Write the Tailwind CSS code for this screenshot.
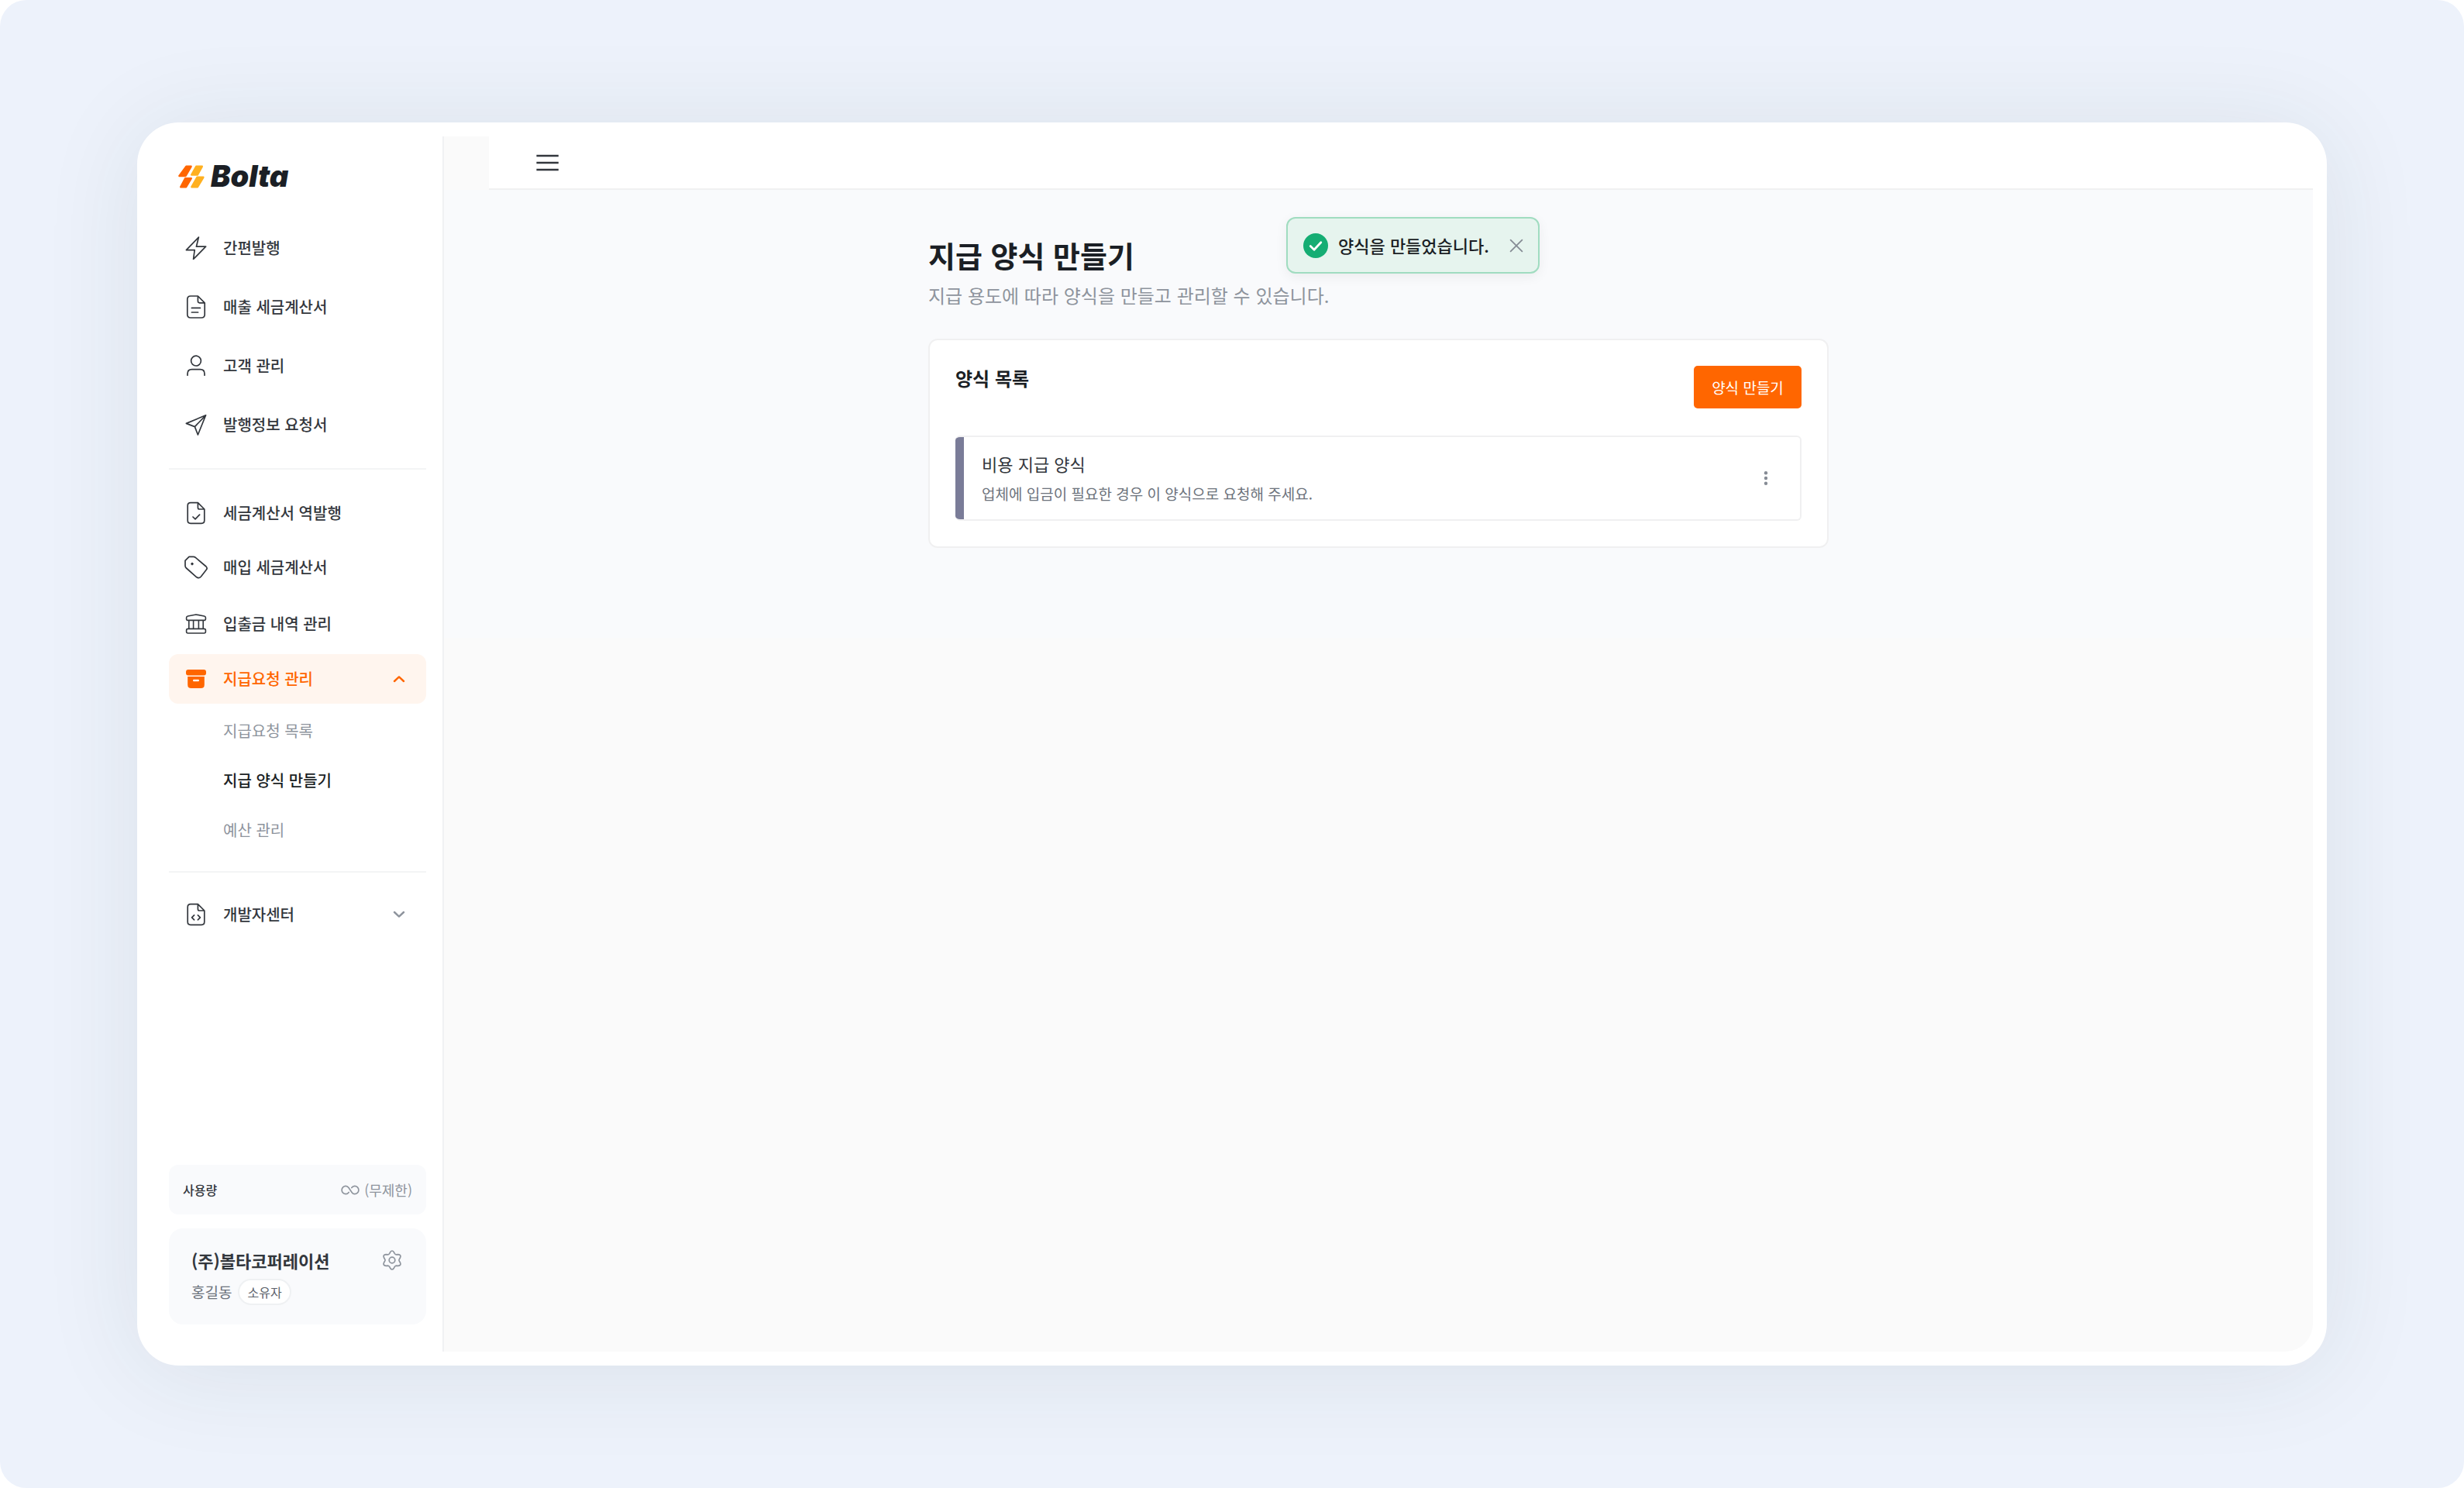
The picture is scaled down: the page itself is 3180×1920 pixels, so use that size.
<!DOCTYPE html>
<html lang="ko">
<head>
  <meta charset="UTF-8" />
  <meta name="viewport" content="width=device-width, initial-scale=1.0"/>
  <title>지급 양식 만들기 - Bolta</title>
  <script src="https://cdn.jsdelivr.net/npm/@tailwindcss/browser@4"></script>
</head>
<body class="bg-white font-['Noto_Sans_CJK_KR',sans-serif] text-[20px] leading-[30px] text-[#33373d]">

  <div class="flex min-h-screen rounded-[34px] bg-[#edf2fb] px-[177px] pt-[158px] pb-[158px]">
    <div class="flex flex-1 rounded-[54px] bg-white p-[18px] shadow-[0_8px_130px_rgba(30,55,60,0.09)]">

      <!-- Sidebar -->
      <aside class="flex w-[378px] shrink-0 flex-col border-r-2 border-[#f0f1f3] pt-[32px] pr-[21px] pb-[35px] pl-[23px]">
        <a href="#" class="flex items-center gap-[8px] pl-[12px]" aria-label="Bolta">
          <svg class="h-[30px] w-[34px]" viewBox="0 0 34 30">
            <g stroke-width="2.4" stroke-linejoin="round">
              <path fill="#ff6600" stroke="#ff6600" d="M10.4 1.8H16.6L9.6 14H1.4Z"/>
              <path fill="#ff6600" stroke="#ff6600" d="M9 17.2H16.8L10.2 28.2H3.2Z"/>
              <path fill="#ffb020" stroke="#ffb020" d="M23.2 1.8H30.8L24.8 12.6H17.2Z"/>
              <path fill="#ffb020" stroke="#ffb020" d="M24.4 15.8H32.4L25 28.2H17.4Z"/>
            </g>
          </svg>
          <span class="pb-[2px] font-['Inter',sans-serif] text-[38px] leading-[38px] font-black text-[#1b1f25] italic [font-feature-settings:'cv11']">Bolta</span>
        </a>

        <nav class="mt-[34px] flex flex-col font-medium">
          <a href="#" class="flex h-[76px] items-center gap-[20px] px-[20px]">
            <svg class="size-[30px]" viewBox="0 0 30 30" fill="none" stroke="currentColor" stroke-width="1.7" stroke-linejoin="round"><path d="M18.4 1 2.4 17.6H13.2L11.6 29.4 27.6 13.2H15.4Z"/></svg>
            간편발행
          </a>
          <a href="#" class="flex h-[76px] items-center gap-[20px] px-[20px]">
            <svg class="size-[30px]" viewBox="0 0 30 30" fill="none" stroke="currentColor" stroke-width="1.7" stroke-linecap="round" stroke-linejoin="round"><path d="M17.4 1H8Q3.8 1 3.8 5.2V24.8Q3.8 29 8 29H22Q26.2 29 26.2 24.8V9.8ZM17.4 1V7.6Q17.4 9.8 19.6 9.8H26.2M9.4 16.4H20.4M9.4 22H17.6"/></svg>
            매출 세금계산서
          </a>
          <a href="#" class="flex h-[76px] items-center gap-[20px] px-[20px]">
            <svg class="size-[30px]" viewBox="0 0 30 30" fill="none" stroke="currentColor" stroke-width="1.7" stroke-linecap="round"><circle cx="15" cy="8.6" r="6.4"/><path d="M4 27.2V25.2Q4 19.6 9.6 19.6H20.4Q26 19.6 26 25.2V27.2"/></svg>
            고객 관리
          </a>
          <a href="#" class="flex h-[76px] items-center gap-[20px] px-[20px]">
            <svg class="size-[30px]" viewBox="0 0 30 30" fill="none" stroke="currentColor" stroke-width="1.7" stroke-linejoin="round"><path d="M27.6 2.8 2.4 13.4 13.4 17.6 17.4 28ZM27.6 2.8 13.4 17.6"/></svg>
            발행정보 요청서
          </a>
        </nav>

        <hr class="mt-[18px] border-t-2 border-[#f3f4f5]" />

        <nav class="mt-[20px] flex flex-col font-medium">
          <a href="#" class="flex h-[72px] items-center gap-[20px] px-[20px]">
            <svg class="size-[30px]" viewBox="0 0 30 30" fill="none" stroke="currentColor" stroke-width="1.7" stroke-linecap="round" stroke-linejoin="round"><path d="M17.4 1.6H8Q4.2 1.6 4.2 5.4V24.6Q4.2 28.4 8 28.4H22Q25.8 28.4 25.8 24.6V10ZM17.4 1.6V8Q17.4 10 19.4 10H25.8M11 20 14 22.8 19.6 17.2"/></svg>
            세금계산서 역발행
          </a>
          <a href="#" class="flex h-[68px] items-center gap-[20px] px-[20px]">
            <svg class="size-[30px]" viewBox="0 0 30 30" fill="none" stroke="currentColor" stroke-width="1.7" stroke-linejoin="round"><path d="M6 1.4H11.4Q13.2 1.4 14.6 2.6L28 14Q30 16 28.4 18L21.4 27Q18.8 30 15.8 27.8L2.4 16Q1 14.8 1 13V6.4Z"/><circle cx="10" cy="10.6" r="1.3" fill="currentColor" stroke-width="1"/></svg>
            매입 세금계산서
          </a>
          <a href="#" class="flex h-[78px] items-center gap-[20px] px-[20px]">
            <svg class="size-[30px]" viewBox="0 0 30 30" fill="none" stroke="currentColor" stroke-width="1.6" stroke-linejoin="round"><path d="M15 3 25.6 5Q27.4 5.4 27.4 7V8.4Q27.4 10.4 25.4 10.4H4.6Q2.6 10.4 2.6 8.4V7Q2.6 5.4 4.4 5ZM5.8 10.4V21.4M11.6 10.4V21.4M18.4 10.4V21.4M24.2 10.4V21.4"/><rect x="2.6" y="21.4" width="24.8" height="5.6" rx="2"/></svg>
            입출금 내역 관리
          </a>
          <button type="button" class="flex h-[64px] items-center gap-[20px] rounded-[12px] bg-[#fff5ee] px-[20px] text-[#ff6600]">
            <svg class="size-[30px]" viewBox="0 0 30 30" fill="currentColor"><rect x="2" y="3" width="26" height="7.4" rx="3"/><path fill-rule="evenodd" d="M4.2 12H25.8V22.4Q25.8 27 21.2 27H8.800Q4.200 27 4.200 22.400ZM12 15.800Q11 15.800 11 17Q11 18.200 12 18.200H18Q19 18.200 19 17Q19 15.800 18 15.800Z"/></svg>
            <span class="flex-1 text-left">지급요청 관리</span>
            <svg class="size-[30px]" viewBox="0 0 30 30" fill="none" stroke="currentColor" stroke-width="2.4" stroke-linecap="round" stroke-linejoin="round"><path d="M9 18 15 12.400 21 18"/></svg>
          </button>
          <a href="#" class="mt-[3px] flex h-[64px] items-center pl-[70px] font-normal text-[#8e949d]">지급요청 목록</a>
          <a href="#" class="flex h-[64px] items-center pl-[70px] text-[#1b1f25]">지급 양식 만들기</a>
          <a href="#" class="flex h-[64px] items-center pl-[70px] font-normal text-[#8e949d]">예산 관리</a>
        </nav>

        <hr class="mt-[21px] border-t-2 border-[#f3f4f5]" />

        <nav class="mt-[22px] flex flex-col font-medium">
          <button type="button" class="flex h-[64px] items-center gap-[20px] px-[20px]">
            <svg class="size-[30px]" viewBox="0 0 30 30" fill="none" stroke="currentColor" stroke-width="1.7" stroke-linecap="round" stroke-linejoin="round"><path d="M17.4 1.6H8Q4.2 1.6 4.2 5.4V24.6Q4.2 28.4 8 28.4H22Q25.8 28.4 25.8 24.6V10ZM17.4 1.6V8Q17.4 10 19.4 10H25.8M12.6 15.8 9.6 18.8 12.6 21.8M17.4 15.8 20.4 18.8 17.4 21.8"/></svg>
            <span class="flex-1 text-left">개발자센터</span>
            <svg class="size-[30px] text-[#8e949d]" viewBox="0 0 30 30" fill="none" stroke="currentColor" stroke-width="2.4" stroke-linecap="round" stroke-linejoin="round"><path d="M9 12 15 17.6 21 12"/></svg>
          </button>
        </nav>

        <div class="mt-auto flex h-[64px] items-center justify-between rounded-[12px] bg-[#f9fafc] px-[18px]">
          <span class="text-[16px] font-medium">사용량</span>
          <span class="flex items-center gap-[6px] text-[18px] text-[#8e949d]">
            <svg class="h-[13px] w-[24px]" viewBox="0 0 26 14" fill="none" stroke="currentColor" stroke-width="1.8" stroke-linecap="round"><path d="M11 10.2Q9.4 12.6 6.800 12.600A5.600 5.600 0 0 1 6.800 1.400Q9.200 1.400 10.800 3.800L15.200 10.200Q16.800 12.600 19.200 12.600A5.600 5.600 0 0 0 19.200 1.400Q16.600 1.400 15 3.800"/></svg>
            (무제한)
          </span>
        </div>

        <div class="mt-[18px] flex h-[124px] flex-col justify-center gap-[9px] rounded-[18px] bg-[#f9fafc] pr-[31px] pl-[29px]">
          <div class="flex items-center justify-between">
            <strong class="text-[22px] font-bold">(주)볼타코퍼레이션</strong>
            <button type="button" aria-label="설정" class="text-[#8e949d]">
              <svg class="size-[26px]" viewBox="0 0 26 26" fill="none" stroke="currentColor" stroke-width="1.7" stroke-linejoin="round"><path d="M10.6 2.8Q13 -.8 15.4 2.8L16.4 4.6Q17.2 5.8 18.6 5.8L20.8 5.7Q25.2 6.2 23.4 10L22.3 11.9Q21.7 13 22.3 14.1L23.4 16Q25.2 19.8 20.8 20.3L18.6 20.2Q17.2 20.2 16.4 21.4L15.4 23.2Q13 26.8 10.6 23.2L9.6 21.4Q8.8 20.2 7.4 20.2L5.2 20.3Q.8 19.8 2.6 16L3.7 14.1Q4.3 13 3.7 11.9L2.6 10Q.8 6.2 5.2 5.7L7.4 5.8Q8.8 5.8 9.6 4.6Z"/><circle cx="13" cy="13" r="3.8"/></svg>
            </button>
          </div>
          <div class="flex items-center gap-[8px]">
            <span class="text-[19px] text-[#6d737c]">홍길동</span>
            <span class="flex h-[34px] items-center rounded-full border-2 border-[#eff1f3] bg-white px-[10px] text-[16px] text-[#5c626b]">소유자</span>
          </div>
        </div>
      </aside>

      <!-- Main -->
      <main class="relative flex-1 rounded-br-[36px] bg-[#fafafa]">
        <header class="ml-[58px] flex h-[69px] items-center border-b-2 border-[#f0f0f1] bg-white pl-[58px]">
          <button type="button" aria-label="메뉴" class="text-[#33373d]">
            <svg class="size-[34px]" viewBox="0 0 34 34" fill="none" stroke="currentColor" stroke-width="2.4"><path d="M3.4 8H31.8M3.4 17H31.8M3.4 26H31.8"/></svg>
          </button>
        </header>

        <section class="min-h-[578px] bg-[#f9fafc] px-[58px] pt-[56px]">
          <div class="mx-auto max-w-[1162px]">
            <h1 class="text-[38px] leading-[56px] font-bold text-[#1b1f25]">지급 양식 만들기</h1>
            <p class="mt-[6px] text-[24px] leading-[36px] text-[#8e949d]">지급 용도에 따라 양식을 만들고 관리할 수 있습니다.</p>

            <div class="mt-[38px] rounded-[12px] border-2 border-[#f0f0f1] bg-white p-[33px]">
              <div class="flex items-start justify-between">
                <h2 class="text-[24px] leading-[32px] font-bold text-[#1b1f25]">양식 목록</h2>
                <button type="button" class="h-[55px] w-[139px] rounded-[5px] bg-[#ff6600] text-[19px] text-white">양식 만들기</button>
              </div>
              <div class="mt-[35px] flex overflow-hidden rounded-[6px] border-y-2 border-r-2 border-[#f0f0f1]">
                <div class="w-[11px] bg-[#7a7c98]"></div>
                <div class="flex-1 py-[18px] pl-[23px]">
                  <h3 class="text-[22px] leading-[32px]">비용 지급 양식</h3>
                  <p class="mt-[8px] text-[19px] leading-[30px] text-[#6d737c]">업체에 입금이 필요한 경우 이 양식으로 요청해 주세요.</p>
                </div>
                <button type="button" aria-label="더보기" class="mr-[29px] text-[#868c95]">
                  <svg class="size-[30px]" viewBox="0 0 30 30" fill="currentColor"><circle cx="15" cy="8.3" r="2.2"/><circle cx="15" cy="15" r="2.2"/><circle cx="15" cy="21.7" r="2.2"/></svg>
                </button>
              </div>
            </div>
          </div>
        </section>

        <!-- Toast -->
        <div role="status" class="absolute top-[104px] left-1/2 flex h-[73px] w-[327px] -translate-x-[119px] items-center rounded-[12px] border-2 border-[#a0dcc0] bg-[#e6f4ee] pr-[19px] pl-[20px] text-[22px] text-[#1b1f25] shadow-[0_4px_16px_rgba(0,0,0,0.06)]">
          <svg class="size-[32px]" viewBox="0 0 32 32" fill="none"><circle cx="16" cy="16" r="16" fill="#15ad73"/><path d="M9.2 16.6 14 21.2 22.8 11.8" stroke="#fff" stroke-width="2.8" stroke-linecap="round" stroke-linejoin="round"/></svg>
          <span class="ml-[13px] flex-1 pb-[2px] font-medium">양식을 만들었습니다.</span>
          <button type="button" aria-label="닫기" class="text-[#868c95]">
            <svg class="size-[18px]" viewBox="0 0 18 18" fill="none" stroke="currentColor" stroke-width="1.8" stroke-linecap="round"><path d="M1.6 1.6 16.4 16.4M16.4 1.6 1.6 16.4"/></svg>
          </button>
        </div>
      </main>

    </div>
  </div>

</body>
</html>
